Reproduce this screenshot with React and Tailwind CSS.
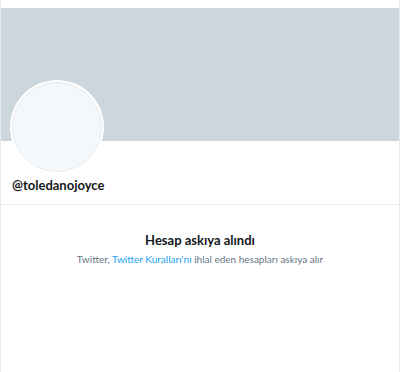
export default function App() {
  return (
    <div className="min-h-screen bg-white" style={{ fontFamily: 'Lato, "Open Sans", sans-serif' }}>
      <div className="w-[400px] h-[372px] pt-2 border-x border-[#e6ecf0] bg-white">
        <div className="h-[133px] bg-[#ccd6dd]" />
        <div className="relative px-[11px]">
          <div className="absolute left-[9px] -top-[61px] w-[94px] h-[94px] rounded-full bg-white p-[2px]">
            <div className="w-full h-full rounded-full bg-[#f5f8fa] border border-[#e6ecf0]" />
          </div>
          <div className="pt-[35px] pb-[10px]">
            <h2 className="text-[13px] font-bold text-[#14171a] leading-[18px]">@toledanojoyce</h2>
          </div>
        </div>
        <div className="border-t border-[#e6ecf0] pt-[26px] text-center">
          <h1 className="text-[13px] font-bold text-[#14171a] leading-[18px]">Hesap askıya alındı</h1>
          <p className="mt-[3px] text-[10px] text-[#657786] leading-[14px]">
            Twitter, <a href="#" className="text-[#1da1f2]">Twitter Kuralları'nı</a> ihlal eden hesapları askıya alır
          </p>
        </div>
      </div>
    </div>
  );
}
